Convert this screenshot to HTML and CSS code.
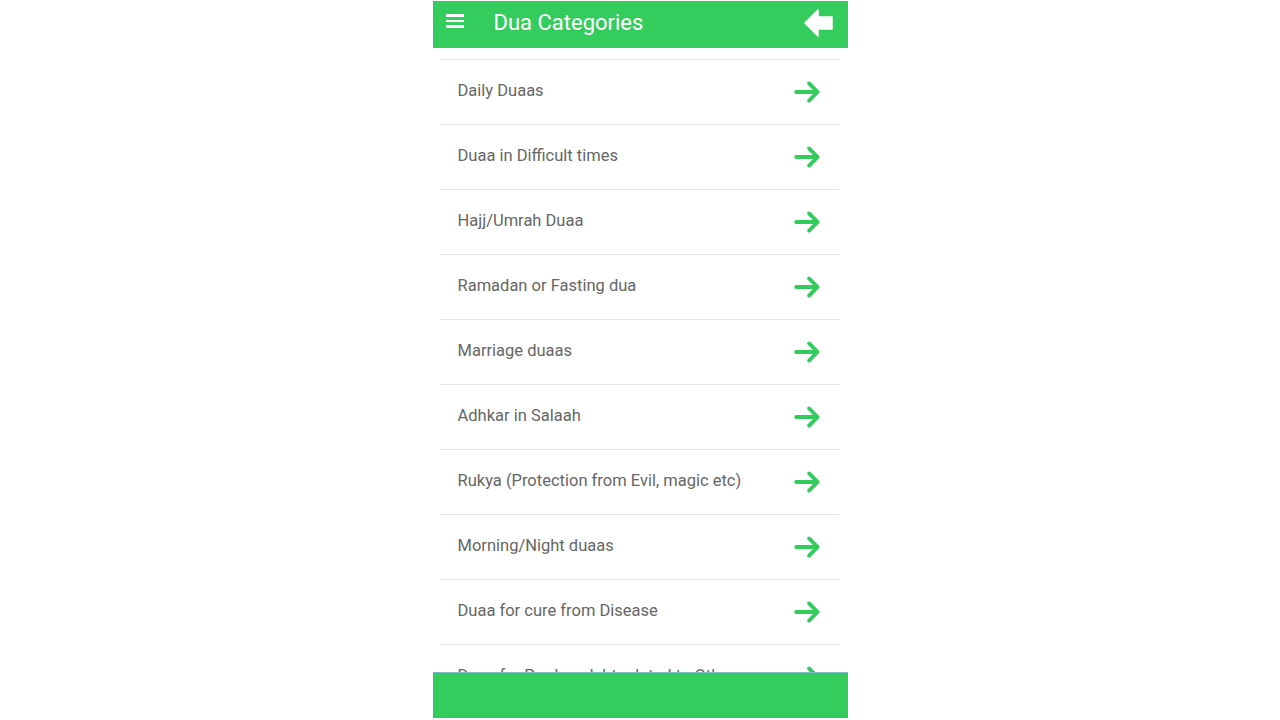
FILE: index.html
```html
<!DOCTYPE html>
<html lang="en">
<head>
    <meta charset="UTF-8">
    <meta name="viewport" content="width=device-width, initial-scale=1.0">
    <title>Dua Categories</title>
    <link rel="stylesheet" href="styles.css">
</head>
<body>
    <div class="app">
        <!-- Barra superior -->
        <header class="topbar">
            <div class="menu-icon">
                <span></span><span></span><span></span>
            </div>
            <h1 class="title">Dua Categories</h1>
            <svg class="back-icon" width="30" height="30" viewBox="0 0 30 30">
                <path d="M1 15 L14 2 L14 9 L28 9 L28 21 L14 21 L14 28 Z" fill="#ffffff" stroke="#ffffff" stroke-width="1.5" stroke-linejoin="round"/>
            </svg>
        </header>

        <ul class="list">
            <li class="item"><span>Daily Duaas</span><svg class="go" viewBox="0 0 28 24"><path d="M3 12 H23 M15 4 L23 12 L15 20"/></svg></li>
            <li class="item"><span>Duaa in Difficult times</span><svg class="go" viewBox="0 0 28 24"><path d="M3 12 H23 M15 4 L23 12 L15 20"/></svg></li>
            <li class="item"><span>Hajj/Umrah Duaa</span><svg class="go" viewBox="0 0 28 24"><path d="M3 12 H23 M15 4 L23 12 L15 20"/></svg></li>
            <li class="item"><span>Ramadan or Fasting dua</span><svg class="go" viewBox="0 0 28 24"><path d="M3 12 H23 M15 4 L23 12 L15 20"/></svg></li>
            <li class="item"><span>Marriage duaas</span><svg class="go" viewBox="0 0 28 24"><path d="M3 12 H23 M15 4 L23 12 L15 20"/></svg></li>
            <li class="item"><span>Adhkar in Salaah</span><svg class="go" viewBox="0 0 28 24"><path d="M3 12 H23 M15 4 L23 12 L15 20"/></svg></li>
            <li class="item"><span>Rukya (Protection from Evil, magic etc)</span><svg class="go" viewBox="0 0 28 24"><path d="M3 12 H23 M15 4 L23 12 L15 20"/></svg></li>
            <li class="item"><span>Morning/Night duaas</span><svg class="go" viewBox="0 0 28 24"><path d="M3 12 H23 M15 4 L23 12 L15 20"/></svg></li>
            <li class="item"><span>Duaa for cure from Disease</span><svg class="go" viewBox="0 0 28 24"><path d="M3 12 H23 M15 4 L23 12 L15 20"/></svg></li>
            <li class="item"><span>Duaa for Pardon, debt related to Others</span><svg class="go" viewBox="0 0 28 24"><path d="M3 12 H23 M15 4 L23 12 L15 20"/></svg></li>
        </ul>

        <footer class="bottombar"></footer>
    </div>
</body>
</html>
```

FILE: styles.css
```css
body {
    margin: 0;
    padding: 0;
    background-color: #ffffff;
    font-family: Roboto, "Noto Sans", Arial, sans-serif;
}
.app {
    width: 415px;
    height: 717px;
    margin: 1px auto 0;
    display: flex;
    flex-direction: column;
    background-color: #ffffff;
    overflow: hidden;
}
.topbar {
    height: 47px;
    flex: none;
    background-color: #35cc5e;
    display: flex;
    align-items: center;
    padding: 0 14px 0 13px;
}
.menu-icon {
    width: 18px;
    display: flex;
    flex-direction: column;
    gap: 3px;
    margin-bottom: 7px;
}
.menu-icon span {
    display: block;
    height: 2.5px;
    background-color: #ffffff;
}
.title {
    flex: 1;
    margin: 0 0 0 30px;
    color: #ffffff;
    font-size: 22px;
    font-weight: 400;
    padding-bottom: 4px;
}
.back-icon {
    display: block;
    margin-bottom: 3px;
}
.list {
    flex: 1;
    list-style: none;
    margin: 11px 0 0;
    padding: 0 9px 0 7px;
    overflow: hidden;
}
.item {
    box-sizing: border-box;
    height: 65px;
    border-top: 1px solid #e2e2e2;
    display: flex;
    align-items: center;
    justify-content: space-between;
    padding: 0 16px 4px 18px;
    color: #666666;
    font-size: 16.5px;
}
.go {
    width: 30px;
    height: 26px;
    fill: none;
    stroke: #33cc5c;
    stroke-width: 3.6;
    stroke-linecap: round;
    stroke-linejoin: round;
    margin-top: 3px;
}
.bottombar {
    height: 45px;
    flex: none;
    background-color: #35cc5e;
    border-top: 1px solid #7fb8c8;
}
```
